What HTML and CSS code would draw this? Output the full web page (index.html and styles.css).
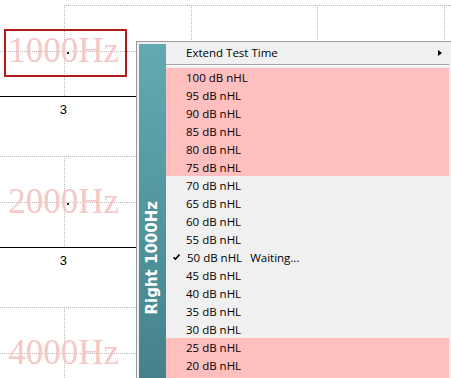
FILE: index.html
```html
<!DOCTYPE html>
<html lang="en">
<head>
    <meta charset="UTF-8">
    <title>Threshold</title>
    <link rel="stylesheet" href="styles.css">
</head>
<body>
    <section class="board">
        <div class="cell first">
            <div class="plot"><div class="label selected">1000Hz</div><span class="dot"></span></div>
            <div class="count">3</div>
        </div>
        <div class="cell"><div class="plot"></div></div>
        <div class="cell"><div class="plot"></div></div>
        <div class="cell"><div class="plot"></div></div>

        <div class="cell">
            <div class="plot"><div class="label">2000Hz</div><span class="dot"></span></div>
            <div class="count">3</div>
        </div>
        <div class="cell"><div class="plot"></div></div>
        <div class="cell"><div class="plot"></div></div>
        <div class="cell"><div class="plot"></div></div>

        <div class="cell">
            <div class="plot"><div class="label">4000Hz</div></div>
        </div>
        <div class="cell"><div class="plot"></div></div>
        <div class="cell"><div class="plot"></div></div>
        <div class="cell"><div class="plot"></div></div>
    </section>

    <!-- menu de contexto -->
    <div class="menu">
        <div class="menu-side"><span class="menu-title">Right 1000Hz</span></div>
        <ul class="menu-list">
            <li class="menu-item sub">Extend Test Time<span class="arrow"></span></li>
            <li class="menu-sep"></li>
            <li class="menu-item hot">100 dB nHL</li>
            <li class="menu-item hot">95 dB nHL</li>
            <li class="menu-item hot">90 dB nHL</li>
            <li class="menu-item hot">85 dB nHL</li>
            <li class="menu-item hot">80 dB nHL</li>
            <li class="menu-item hot">75 dB nHL</li>
            <li class="menu-item">70 dB nHL</li>
            <li class="menu-item">65 dB nHL</li>
            <li class="menu-item">60 dB nHL</li>
            <li class="menu-item">55 dB nHL</li>
            <li class="menu-item checked">
                <svg class="check" width="7" height="6" viewBox="0 0 7 6"><path d="M0.6 3.2 L2.4 5.2 L6.4 0.6" fill="none" stroke="#000" stroke-width="1.6"/></svg>
                50 dB nHL<span class="status">Waiting...</span>
            </li>
            <li class="menu-item">45 dB nHL</li>
            <li class="menu-item">40 dB nHL</li>
            <li class="menu-item">35 dB nHL</li>
            <li class="menu-item">30 dB nHL</li>
            <li class="menu-item hot">25 dB nHL</li>
            <li class="menu-item hot">20 dB nHL</li>
            <li class="menu-item hot"></li>
        </ul>
    </div>
</body>
</html>
```
FILE: styles.css
```css
body {
    margin: 0;
    width: 451px;
    height: 378px;
    overflow: hidden;
    background-color: white;
    color: #000;
    font-family: "Liberation Sans", Arial, sans-serif;
}

.board {
    display: grid;
    grid-template-columns: repeat(4, 126.5px);
    margin-top: 5px;
}

.cell {
    height: 151px;
    background: repeating-linear-gradient(to right, #b8b8b8 0 1px, transparent 1px 2px) 0 0 / 100% 1px no-repeat;
}

.cell.first {
    background-position: 64px 0;
}

.plot {
    position: relative;
    height: 92px;
    box-sizing: border-box;
    border-bottom: 1px solid #000;
    display: flex;
    align-items: center;
    justify-content: center;
    background:
        repeating-linear-gradient(to bottom, #b8b8b8 0 1px, transparent 1px 2px) 64px 0 / 1px 100% no-repeat,
        repeating-linear-gradient(to right, #b8b8b8 0 1px, transparent 1px 2px) 0 46px / 100% 1px no-repeat;
}

.label {
    width: 125px;
    height: 48px;
    box-sizing: border-box;
    border: 2px solid transparent;
    margin: 5px 0 0 4px;
    padding-right: 3px;
    font-family: "Liberation Serif", "Times New Roman", serif;
    font-size: 35px;
    line-height: 40px;
    text-align: center;
    color: #f5c8c8;
}

.label.selected {
    border-color: #b01c1c;
}

.dot {
    position: absolute;
    left: 67px;
    top: 47px;
    width: 2px;
    height: 2px;
    background: #222;
}

.count {
    padding-top: 6px;
    font-size: 13px;
    line-height: 14px;
    text-align: center;
}

.menu {
    position: absolute;
    left: 136px;
    top: 41px;
    width: 310px;
    display: flex;
    padding: 2px 4px 2px 2px;
    border: 1px solid #9a9a9a;
    background-color: #f0f0f0;
}

.menu-side {
    width: 27px;
    flex-shrink: 0;
    display: flex;
    justify-content: center;
    align-items: flex-start;
    padding-top: 157px;
    background: linear-gradient(to bottom, #62aab1 0, #44828b 334px);
}

.menu-title {
    writing-mode: vertical-rl;
    transform: rotate(180deg);
    font-family: "DejaVu Sans", Verdana, sans-serif;
    font-weight: bold;
    font-size: 15px;
    line-height: 1;
    color: white;
}

.menu-list {
    flex: 1;
    list-style: none;
    margin: 0;
    padding: 0;
    font-family: "Open Sans", "Segoe UI", sans-serif;
    font-size: 11.5px;
}

.menu-item {
    display: flex;
    align-items: center;
    height: 18px;
    padding-left: 20px;
    white-space: nowrap;
}

.menu-item.sub {
    height: 19px;
    box-sizing: border-box;
    padding-bottom: 2px;
}

.menu-item.hot {
    background-color: #ffbfbf;
}

.menu-item.checked {
    padding-left: 7px;
}

.check {
    margin-right: 7px;
}

.status {
    margin-left: 8px;
}

.arrow {
    margin-left: auto;
    margin-right: 7px;
    border-left: 4px solid #000;
    border-top: 3.5px solid transparent;
    border-bottom: 3.5px solid transparent;
}

.menu-sep {
    margin: 1px 0 2px;
    border-top: 1px solid #a0a0a0;
    border-bottom: 1px solid #fff;
}
```
